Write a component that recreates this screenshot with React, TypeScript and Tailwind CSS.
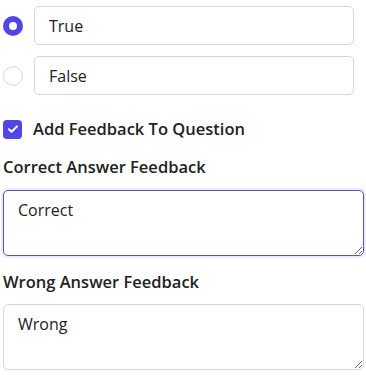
import { useState } from 'react'

const font = { fontFamily: '"Open Sans", "Noto Sans", sans-serif' }

export default function App() {
  const [answer, setAnswer] = useState('true')
  const [feedback, setFeedback] = useState(true)

  return (
    <div className="bg-white text-[#222] pl-[3px] pr-[2px]" style={font}>
      <div className="flex flex-col gap-[11px] pt-[6px] pr-[10px]">
        {['True', 'False'].map(label => {
          const checked = answer === label.toLowerCase()
          return (
            <div key={label} className="flex items-center gap-[11px]">
              <button
                onClick={() => setAnswer(label.toLowerCase())}
                className={
                  checked
                    ? 'w-[20px] h-[20px] rounded-full bg-[#4f46e5] flex items-center justify-center shrink-0'
                    : 'w-[20px] h-[20px] rounded-full border border-[#d9d9d9] bg-white shrink-0'
                }
              >
                {checked && <span className="w-[8px] h-[8px] rounded-full bg-white" />}
              </button>
              <input
                defaultValue={label}
                className="flex-1 h-[39px] border border-[#d6d6d6] rounded-[5px] px-[14px] text-[16px] outline-none"
              />
            </div>
          )
        })}
      </div>

      <label className="flex items-center gap-[11px] mt-[22px] cursor-pointer">
        <span
          onClick={() => setFeedback(!feedback)}
          className="w-[19px] h-[19px] rounded-[4px] bg-[#4f46e5] flex items-center justify-center"
        >
          {feedback && (
            <svg width="12" height="12" viewBox="0 0 12 12" fill="none">
              <path d="M2 6.3l2.6 2.5L10 3.4" stroke="white" strokeWidth="2" strokeLinecap="round" strokeLinejoin="round" />
            </svg>
          )}
        </span>
        <span className="text-[16.5px] leading-[24px] font-semibold">Add Feedback To Question</span>
      </label>

      <div className="text-[16.5px] leading-[24px] font-semibold mt-[14px]">Correct Answer Feedback</div>
      <textarea
        defaultValue="Correct"
        className="block w-full h-[66px] mt-[11px] border border-[#5b50c2] rounded-[5px] px-[14px] py-[7px] text-[16px] outline-none ring-2 ring-[#eeeafc]"
      />

      <div className="text-[16.5px] leading-[24px] font-semibold mt-[14px]">Wrong Answer Feedback</div>
      <textarea
        defaultValue="Wrong"
        className="block w-full h-[66px] mt-[10px] border border-[#d6d6d6] rounded-[5px] px-[14px] py-[7px] text-[16px] outline-none"
      />
    </div>
  )
}
